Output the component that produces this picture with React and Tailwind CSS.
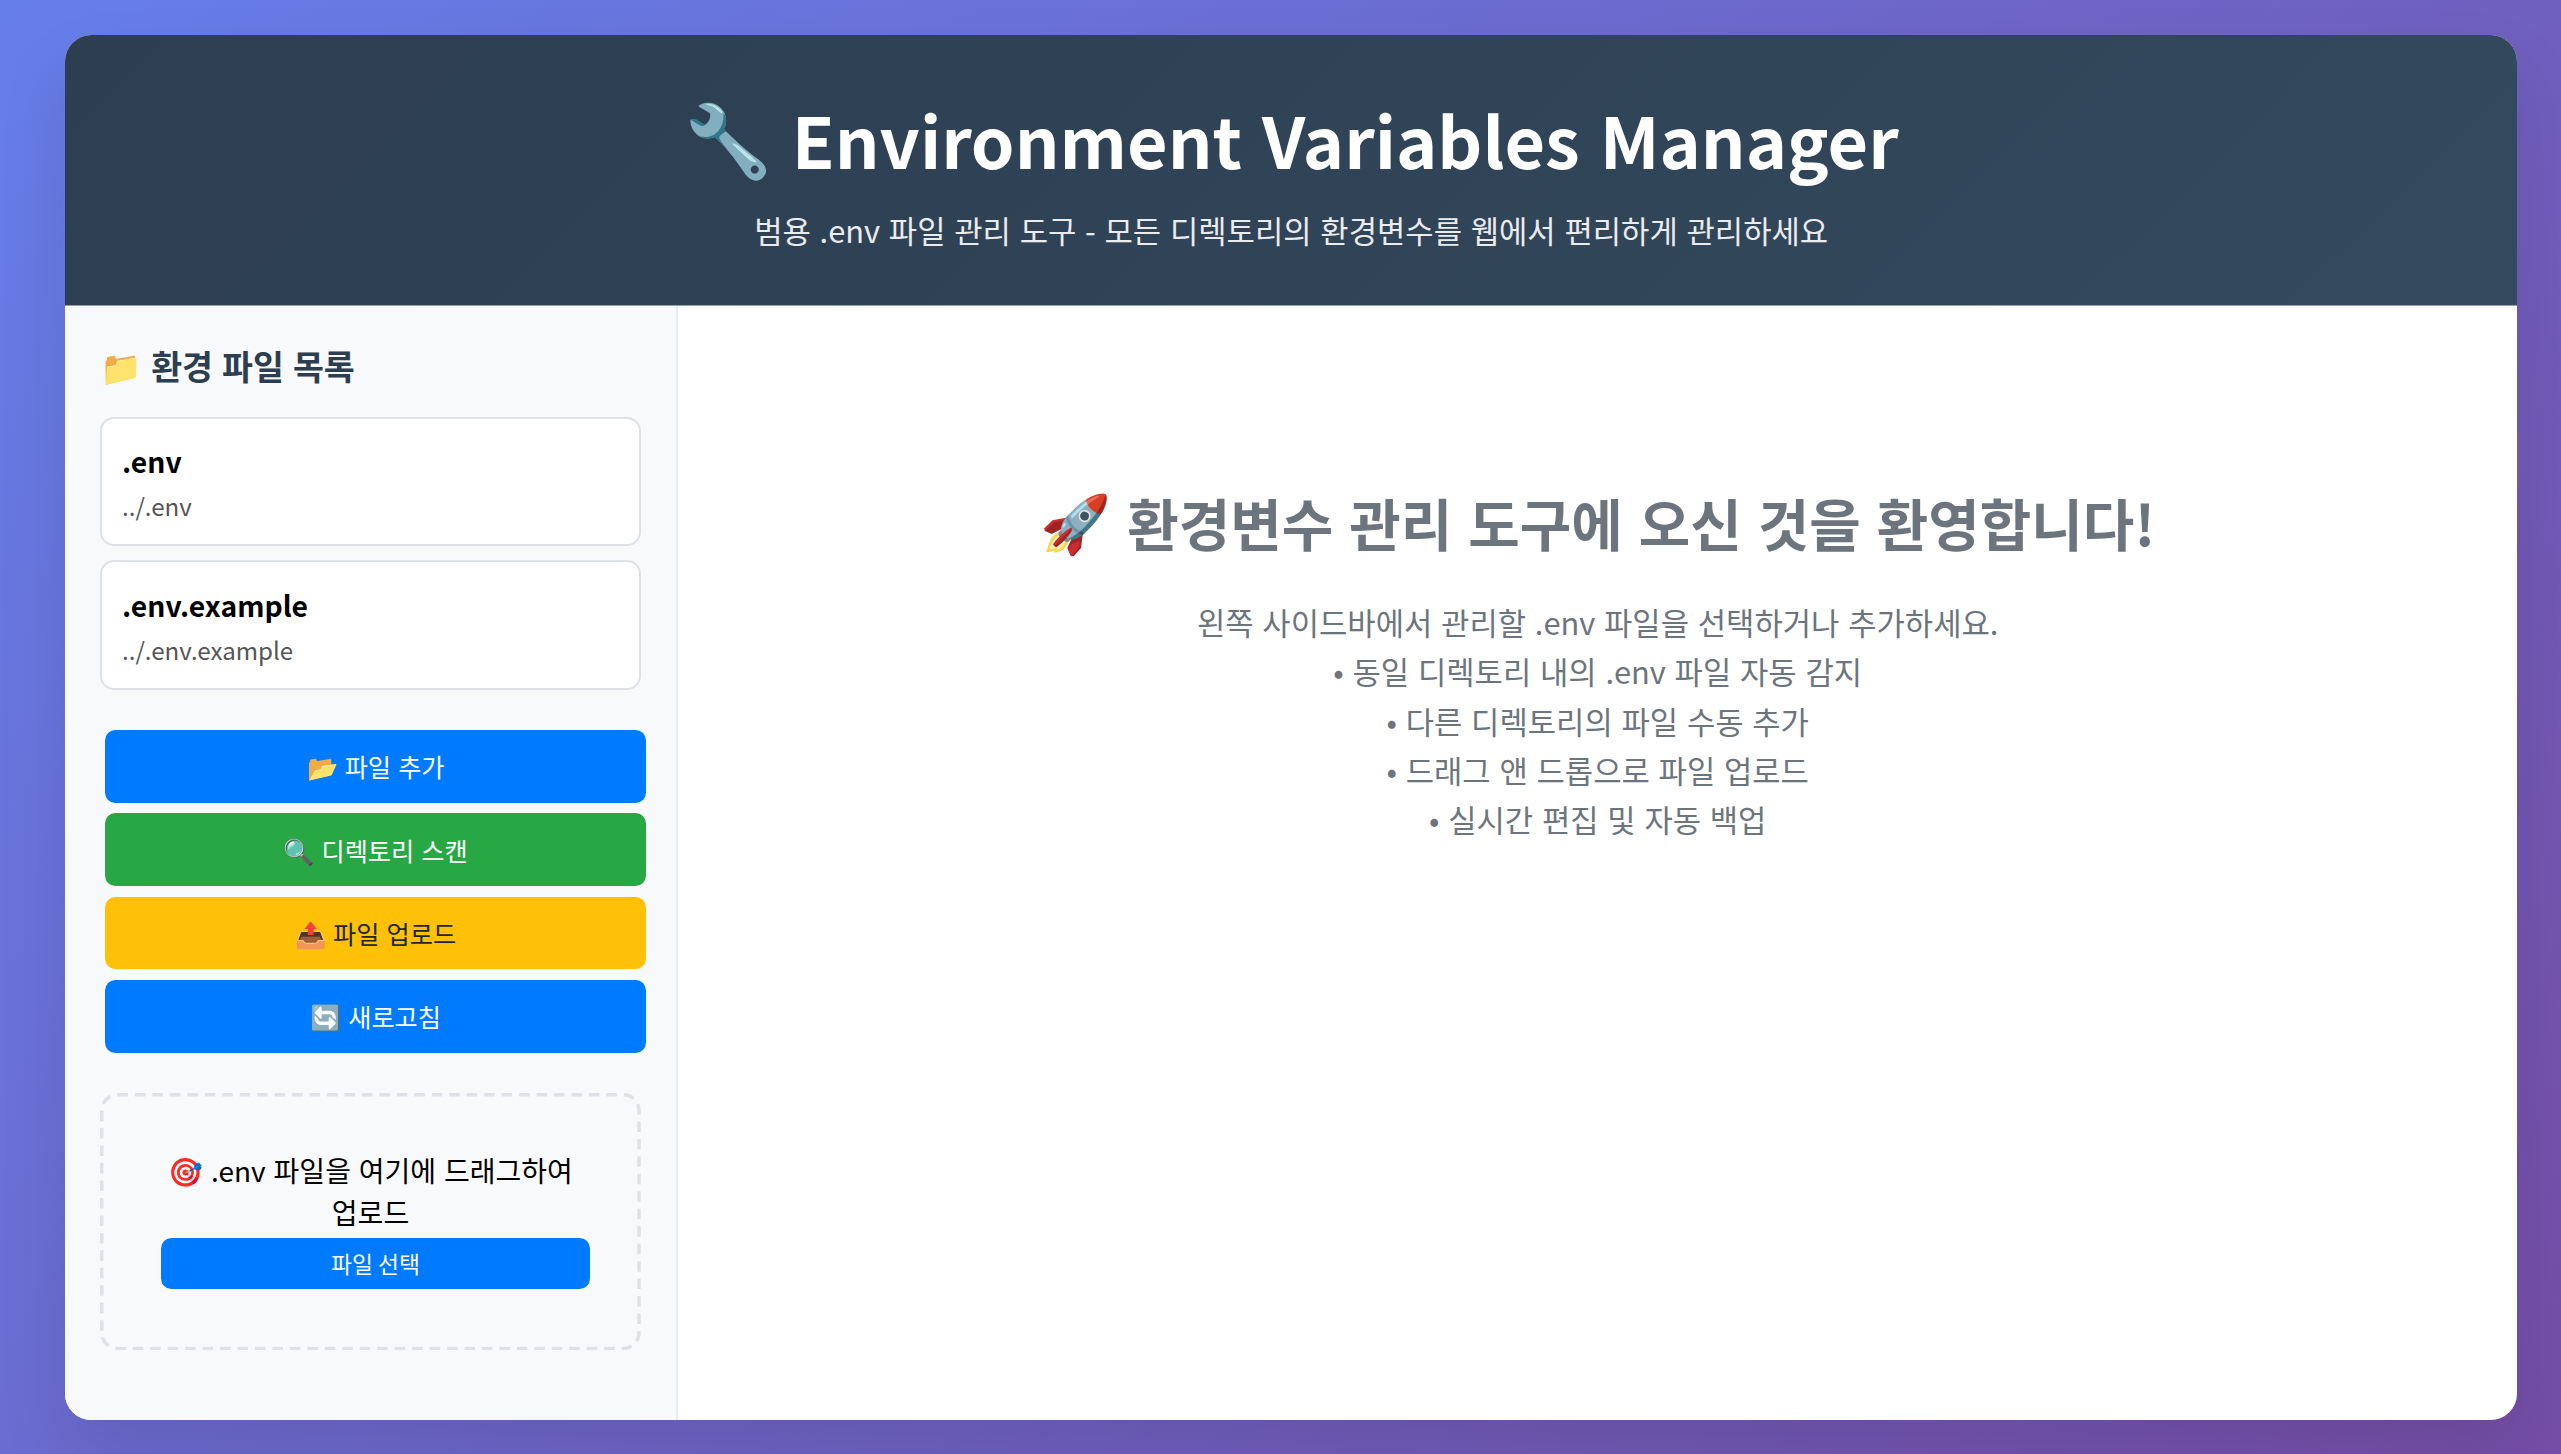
const files = [
  { name: ".env", path: "../.env" },
  { name: ".env.example", path: "../.env.example" },
];

const actions = [
  { label: "📂 파일 추가", tone: "bg-[#007bff] text-white" },
  { label: "🔍 디렉토리 스캔", tone: "bg-[#28a745] text-white" },
  { label: "📤 파일 업로드", tone: "bg-[#ffc107] text-[#212529]" },
  { label: "🔄 새로고침", tone: "bg-[#007bff] text-white" },
];

const features = [
  "왼쪽 사이드바에서 관리할 .env 파일을 선택하거나 추가하세요.",
  "• 동일 디렉토리 내의 .env 파일 자동 감지",
  "• 다른 디렉토리의 파일 수동 추가",
  "• 드래그 앤 드롭으로 파일 업로드",
  "• 실시간 편집 및 자동 백업",
];

function Header() {
  return (
    <header className="h-[271px] shrink-0 border-b border-[#97a0ae] bg-[linear-gradient(135deg,#2c3e50,#34495e)] pt-[53px] text-center text-white">
      <h1 className="mb-[16.5px] text-[70px] leading-[102px] font-bold [word-spacing:0.058em]">
        <span className="relative -top-[3px] text-[71px] leading-none">🔧</span> Environment Variables Manager
      </h1>
      <p className="text-[30.8px] leading-[45px] opacity-90 [word-spacing:0.06em]">
        범용 .env 파일 관리 도구 - 모든 디렉토리의 환경변수를 웹에서 편리하게 관리하세요
      </p>
    </header>
  );
}

function Sidebar() {
  return (
    <aside className="w-[613px] shrink-0 border-r-2 border-[#e9ecef] bg-[#f8f9fa] p-[35px]">
      <h3 className="mb-[26px] text-[33.6px] leading-[50px] font-bold text-[#2c3e50] [word-spacing:0.045em]">📁 환경 파일 목록</h3>
      <ul className="flex flex-col gap-[14px]">
        {files.map((f) => (
          <li key={f.name} className="h-[129.4px] rounded-[14px] border-2 border-[#dee2e6] bg-white px-[20px] pt-[21.4px]">
            <div className="text-[28.3px] leading-[41px] font-bold">{f.name}</div>
            <div className="mt-[6px] text-[24.1px] leading-[38px] text-[#555]">{f.path}</div>
          </li>
        ))}
      </ul>
      <div className="mt-[40.3px] -mr-[5px] ml-[5px] flex flex-col gap-[10.5px]">
        {actions.map((a) => (
          <button key={a.label} className={`h-[72.8px] rounded-[10.5px] text-[25.2px] leading-[38px] [word-spacing:0.06em] ${a.tone}`}>
            {a.label}
          </button>
        ))}
      </div>
      <div className="relative mt-[40px] h-[258px] px-[56px] pt-[56.6px] text-center text-[28px] leading-[42px]">
        <div className="pointer-events-none absolute top-0 left-0 h-[147.4px] w-[309px] origin-top-left scale-[1.75] rounded-[10px] border-2 border-dashed border-[#dee2e6]" />
        <p className="-mx-2 [word-spacing:0.06em]">🎯 .env 파일을 여기에 드래그하여<br />업로드</p>
        <button className="relative left-[5px] mt-[4.7px] h-[51px] w-full rounded-[10.5px] bg-[#007bff] text-[22.8px] leading-[34px] text-white">
          파일 선택
        </button>
      </div>
    </aside>
  );
}

function Welcome() {
  return (
    <main className="flex-1 pt-[175px] text-center text-[#6c757d]">
      <h2 className="text-[56px] leading-[82px] font-bold [word-spacing:0.058em]">
        <span className="relative -top-[2px] text-[57px] leading-none">🚀</span> 환경변수 관리 도구에 오신 것을 환영합니다!
      </h2>
      <div className="mt-[34px] text-[30.8px] leading-[49.35px] [word-spacing:0.06em]">
        {features.map((t) => (
          <p key={t}>{t}</p>
        ))}
      </div>
    </main>
  );
}

export default function App() {
  return (
    <div className="h-[1454px] w-[2561px] overflow-hidden bg-[linear-gradient(135deg,#667eea_0%,#764ba2_106%)] pt-[35px] pl-[65px] font-['Noto_Sans_CJK_KR',sans-serif] text-black">
      <div className="flex h-[1385.3px] w-[2452.4px] flex-col overflow-hidden rounded-[26.25px] bg-white shadow-[0_35px_70px_rgba(0,0,0,0.1)]">
        <Header />
        <div className="flex flex-1">
          <Sidebar />
          <Welcome />
        </div>
      </div>
    </div>
  );
}
